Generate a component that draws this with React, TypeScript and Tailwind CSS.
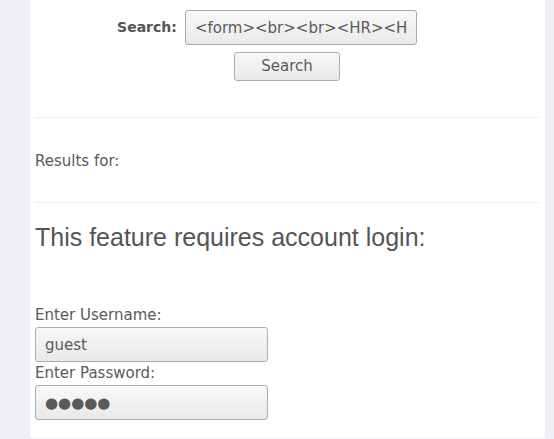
import React from "react";

const font = { fontFamily: '"DejaVu Sans", sans-serif' };

const fieldClass =
  "block h-[35px] rounded-[3px] border border-[#adadad] bg-gradient-to-b from-[#f8f8f8] to-[#e9e9e9] px-[9px] text-[15px] text-[#5a5a5a] outline-none";

export default function App() {
  return (
    <div className="min-h-screen bg-[#eff0f5]" style={font}>
      <div className="ml-[30px] w-[515px] min-h-[438px] bg-white pl-[5px] pr-[6px] pt-[10px] text-[#5a5a5a]">
        {/* search form */}
        <div className="flex h-[35px] items-center justify-center gap-[8px] pr-[40px]">
          <label className="text-[14px] font-bold text-[#555]">Search:</label>
          <input
            readOnly
            value="<form><br><br><HR><HTML><h1>"
            className={`${fieldClass} w-[232px]`}
          />
        </div>
        <button
          type="button"
          className="mx-auto mt-[7px] block h-[29px] w-[106px] rounded-[3px] border border-[#adadad] bg-gradient-to-b from-[#f8f8f8] to-[#e9e9e9] text-[15px] text-[#5a5a5a]"
        >
          Search
        </button>

        <div className="mt-[36px] h-px bg-[#eeeeee]" />

        <div className="mt-[34px] text-[15px] leading-[18px]">Results for:</div>

        <div className="mt-[32px] h-px bg-[#eeeeee]" />

        <h2
          className="mt-[20px] text-[25px] leading-[29px] text-[#555]"
          style={{ fontFamily: '"Liberation Sans", Arial, sans-serif' }}
        >
          This feature requires account login:
        </h2>

        <div className="mt-[54px] text-[15px] leading-[18px]">Enter Username:</div>
        <input readOnly value="guest" className={`${fieldClass} mt-[3px] w-[233px]`} />
        <div className="mt-[2px] text-[15px] leading-[18px]">Enter Password:</div>
        <input
          readOnly
          value={"\u25CF\u25CF\u25CF\u25CF\u25CF"}
          className={`${fieldClass} mt-[3px] w-[233px]`}
        />
      </div>
    </div>
  );
}
